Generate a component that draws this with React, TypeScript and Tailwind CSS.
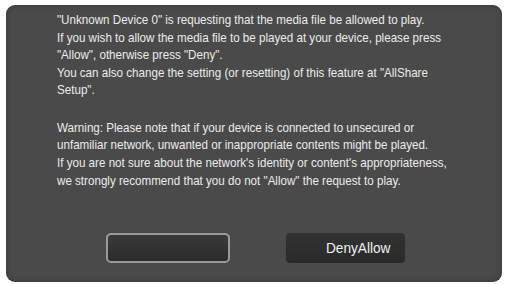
export default function App() {
  const font = { fontFamily: '"Liberation Sans", Arial, sans-serif' };
  return (
    <div className="w-[507px] h-[284px] bg-white pt-[5px] pl-[6px] overflow-hidden">
      <div
        className="w-[496px] h-[277px] bg-[#4a4a4a] rounded-[9px] flex flex-col shadow-[inset_0_0_6px_rgba(0,0,0,0.25)]"
        style={font}
      >
        <div className="pl-[51px] pt-[6px]">
          <div className="origin-left scale-x-[0.86] text-[13.5px] leading-[17.6px] text-[#ececec] whitespace-nowrap">
            <div>"Unknown Device 0" is requesting that the media file be allowed to play.</div>
            <div>If you wish to allow the media file to be played at your device, please press</div>
            <div>"Allow", otherwise press "Deny".</div>
            <div>You can also change the setting (or resetting) of this feature at "AllShare</div>
            <div>Setup".</div>
            <div className="h-[19.6px]"></div>
            <div>Warning: Please note that if your device is connected to unsecured or</div>
            <div>unfamiliar network, unwanted or inappropriate contents might be played.</div>
            <div>If you are not sure about the network's identity or content's appropriateness,</div>
            <div className="mt-[1px]">we strongly recommend that you do not "Allow" the request to play.</div>
          </div>
        </div>
        <div className="flex mt-[43px] pl-[100px]">
          <div className="w-[124px] h-[30px] rounded-[5px] border-2 border-[#9a9a9a] bg-gradient-to-b from-[#3a3a3a] to-[#2c2c2c]"></div>
          <div className="ml-[56px] w-[119px] h-[30px] rounded-[4px] bg-gradient-to-b from-[#323232] to-[#2a2a2a] flex items-center pl-[40px]">
            <span className="origin-left scale-x-[0.88] text-[15.5px] text-[#f0f0f0] whitespace-nowrap">DenyAllow</span>
          </div>
        </div>
      </div>
    </div>
  );
}
